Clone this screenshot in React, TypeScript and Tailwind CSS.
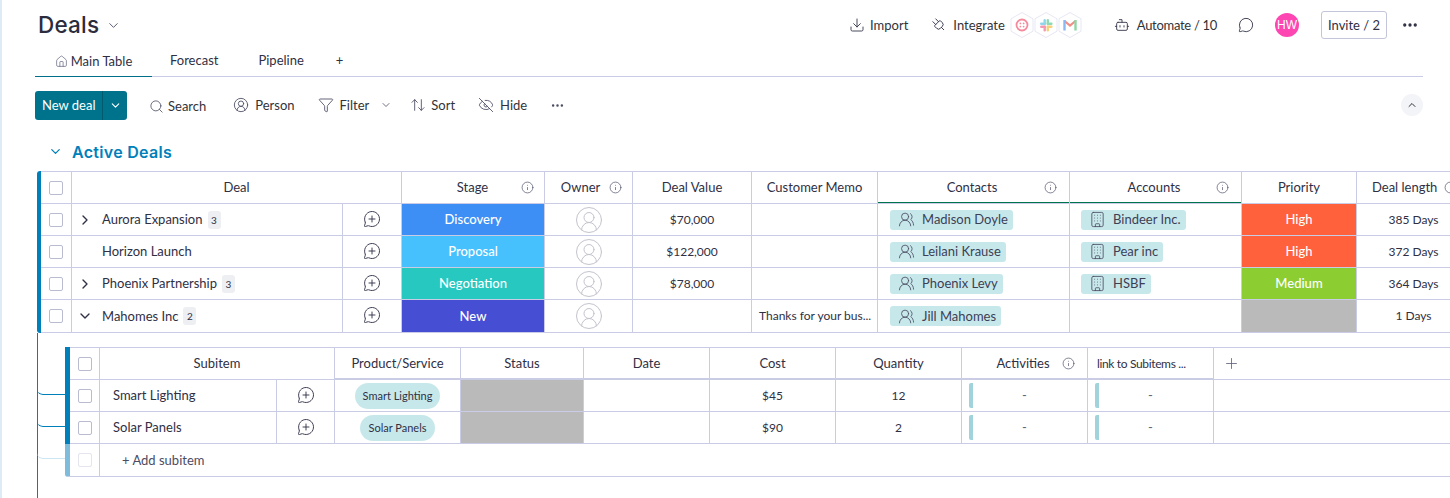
import { ReactNode } from "react";
import {
  ArrowUpDown,
  Bot,
  Building,
  ChevronDown,
  ChevronRight,
  ChevronUp,
  CircleUserRound,
  Download,
  Ellipsis,
  EyeOff,
  Funnel,
  House,
  Info,
  MessageCircle,
  MessageCirclePlus,
  Plug,
  Plus,
  Search,
  UsersRound,
} from "lucide-react";

const mainCols = "grid grid-cols-[31px_271px_59px_143px_88px_119px_126px_192px_172px_115px_114px]";
const subCols = "grid grid-cols-[30px_177px_58px_126px_123px_126px_126px_126px_126px_126px_400px]";
const thick = "shadow-[inset_0_-1px_0_#c9cce4]";

const deals = [
  {
    name: "Aurora Expansion",
    count: 3,
    arrow: "right",
    stage: "Discovery",
    stageColor: "bg-[#3d8ff5]",
    value: "$70,000",
    memo: "",
    contact: "Madison Doyle",
    account: "Bindeer Inc.",
    priority: "High",
    priorityColor: "bg-[#fe613c]",
    length: "385 Days",
  },
  {
    name: "Horizon Launch",
    count: 0,
    arrow: "",
    stage: "Proposal",
    stageColor: "bg-[#46c1fe]",
    value: "$122,000",
    memo: "",
    contact: "Leilani Krause",
    account: "Pear inc",
    priority: "High",
    priorityColor: "bg-[#fe613c]",
    length: "372 Days",
  },
  {
    name: "Phoenix Partnership",
    count: 3,
    arrow: "right",
    stage: "Negotiation",
    stageColor: "bg-[#26c8bf]",
    value: "$78,000",
    memo: "",
    contact: "Phoenix Levy",
    account: "HSBF",
    priority: "Medium",
    priorityColor: "bg-[#8ccd32]",
    length: "364 Days",
  },
  {
    name: "Mahomes Inc",
    count: 2,
    arrow: "down",
    stage: "New",
    stageColor: "bg-[#464ed4]",
    value: "",
    memo: "Thanks for your bus...",
    contact: "Jill Mahomes",
    account: "",
    priority: "",
    priorityColor: "bg-[#bababa]",
    length: "1 Days",
  },
];

const subitems = [
  { name: "Smart Lighting", cost: "$45", qty: "12" },
  { name: "Solar Panels", cost: "$90", qty: "2" },
];

function Cell({ children, className = "" }: { children?: ReactNode; className?: string }) {
  return (
    <div className={`flex items-center justify-center min-w-0 border-r border-[#c9cce4] whitespace-nowrap ${className}`}>
      {children}
    </div>
  );
}

function HeadInfo({ label }: { label: string }) {
  return (
    <div className="flex items-center justify-between w-full">
      <span className="flex-1 text-center">{label}</span>
      <Info className="w-[13px] h-[13px] text-[#50526b] shrink-0" strokeWidth={1.3} />
    </div>
  );
}

function Checkbox({ faded }: { faded?: boolean }) {
  return (
    <span className={`block w-[14px] h-[14px] bg-white rounded-[2px] border ${faded ? "border-[#e4e5ee]" : "border-[#b9bbd0]"}`} />
  );
}

function Hex({ children }: { children: ReactNode }) {
  return (
    <svg viewBox="0 0 24 28" className="w-[24px] h-[28px]">
      <path d="M12 1.5 L23 7.8 V20.2 L12 26.5 L1 20.2 V7.8 Z" fill="white" stroke="#e7e8f3" strokeWidth="1" />
      {children}
    </svg>
  );
}

function Tag({ icon, text }: { icon: ReactNode; text: string }) {
  return (
    <span className="flex items-center gap-[7px] h-[20px] pl-[8px] pr-[5px] rounded-[3px] bg-[#c7e8eb] text-[#3d3f55]">
      {icon}
      {text}
    </span>
  );
}

function Toolbar({ icon, label, className = "" }: { icon: ReactNode; label: string; className?: string }) {
  return (
    <span className={`flex items-center text-[#323338] ${className}`}>
      {icon}
      {label}
    </span>
  );
}

export default function App() {
  return (
    <div className="w-[1450px] h-[498px] overflow-hidden bg-white border-l-2 border-[#dcebf5] text-[13px] leading-none text-[#2f3044] font-['Lato','Inter',sans-serif]">
      {/* board header */}
      <div className="flex items-center justify-between h-[50px] pl-[36px] pr-[31px]">
        <div className="flex items-center gap-[7px]">
          <h1 className="text-[22.5px] font-medium tracking-[0.2px] font-['Inter',sans-serif] text-[#2b2c3c]">Deals</h1>
          <ChevronDown className="w-[15px] h-[15px] text-[#50526b]" strokeWidth={1.5} />
        </div>
        <div className="flex items-center">
          <Toolbar icon={<Download className="w-[16px] h-[16px] mr-[5px] text-[#3b3c50]" strokeWidth={1.4} />} label="Import" className="mr-[23px]" />
          <Toolbar icon={<Plug className="w-[16px] h-[16px] mr-[6px] -rotate-45 text-[#3b3c50]" strokeWidth={1.4} />} label="Integrate" className="mr-[5px]" />
          <div className="flex items-center mr-[32px]">
            <Hex>
              <circle cx="12" cy="14" r="5.5" fill="none" stroke="#f58a9d" strokeWidth="1.8" />
              <circle cx="10.4" cy="12.4" r="0.9" fill="#f58a9d" />
              <circle cx="13.6" cy="12.4" r="0.9" fill="#f58a9d" />
              <circle cx="10.4" cy="15.6" r="0.9" fill="#f58a9d" />
              <circle cx="13.6" cy="15.6" r="0.9" fill="#f58a9d" />
            </Hex>
            <Hex>
              <rect x="9.5" y="8" width="2.4" height="6" rx="1.2" fill="#8fd6ea" />
              <rect x="6" y="11.5" width="6" height="2.4" rx="1.2" fill="#8fd6ea" />
              <rect x="12.6" y="8" width="2.4" height="6" rx="1.2" fill="#8fd9b4" />
              <rect x="12.6" y="11.5" width="6" height="2.4" rx="1.2" fill="#8fd9b4" />
              <rect x="9.5" y="14.5" width="2.4" height="6" rx="1.2" fill="#f29ab4" />
              <rect x="6" y="14.5" width="6" height="2.4" rx="1.2" fill="#f29ab4" />
              <rect x="12.6" y="14.5" width="2.4" height="6" rx="1.2" fill="#f6d27c" />
              <rect x="12.6" y="14.5" width="6" height="2.4" rx="1.2" fill="#f6d27c" />
            </Hex>
            <Hex>
              <path d="M6.5 10 L12 14.5 L17.5 10" fill="none" stroke="#f08f86" strokeWidth="2.2" />
              <path d="M6.5 9 V19.5" stroke="#8ab8f2" strokeWidth="2.4" />
              <path d="M17.5 9 V19.5" stroke="#8ed6a5" strokeWidth="2.4" />
            </Hex>
          </div>
          <Toolbar icon={<Bot className="w-[16px] h-[16px] mr-[7px] text-[#3b3c50]" strokeWidth={1.4} />} label="Automate / 10" className="mr-[21px] tracking-[-0.3px]" />
          <MessageCircle className="w-[16px] h-[16px] mr-[21px] text-[#3b3c50]" strokeWidth={1.4} />
          <span className="flex items-center justify-center w-[24px] h-[24px] mr-[22px] rounded-full bg-[#fd46b1] text-white text-[12px] font-['Liberation_Sans',sans-serif]">HW</span>
          <span className="flex items-center justify-center w-[66px] h-[28px] mr-[14px] rounded-[3px] border border-[#c3c5da]">Invite / 2</span>
          <Ellipsis className="w-[18px] h-[18px] text-[#2f3044]" strokeWidth={2.4} />
        </div>
      </div>

      {/* tabs */}
      <div className="flex items-stretch h-[27px] ml-[33px] mr-[27px] border-b border-[#c9cce4]">
        <div className="flex items-center justify-center w-[117px] gap-[3px] -mb-[1px] border-b border-[#00708a] pb-[4px]">
          <House className="w-[13px] h-[13px] text-[#62647c]" strokeWidth={1.3} />
          Main Table
        </div>
        <span className="flex items-center pb-[6px] ml-[18px]">Forecast</span>
        <span className="flex items-center pb-[6px] ml-[40px]">Pipeline</span>
        <span className="flex items-center pb-[6px] ml-[32px]">+</span>
      </div>

      {/* toolbar */}
      <div className="flex items-center h-[56px] ml-[33px] mr-[27px]">
        <div className="flex items-stretch h-[29px] rounded-[3px] bg-[#00738c] text-white whitespace-nowrap">
          <span className="flex items-center pl-[7px] w-[68px] border-r border-[#005a6e]">New deal</span>
          <span className="flex items-center justify-center w-[24px]">
            <ChevronDown className="w-[13px] h-[13px]" strokeWidth={2} />
          </span>
        </div>
        <Toolbar icon={<Search className="w-[15px] h-[15px] mr-[4px] text-[#4b4d63]" strokeWidth={1.3} />} label="Search" className="ml-[22px] pt-[2px]" />
        <Toolbar icon={<CircleUserRound className="w-[16px] h-[16px] mr-[6px] text-[#4b4d63]" strokeWidth={1.3} />} label="Person" className="ml-[27px]" />
        <Toolbar icon={<Funnel className="w-[16px] h-[16px] mr-[6px] text-[#4b4d63]" strokeWidth={1.3} />} label="Filter" className="ml-[23px]" />
        <ChevronDown className="w-[12px] h-[12px] ml-[11px] text-[#4b4d63]" strokeWidth={1.6} />
        <Toolbar icon={<ArrowUpDown className="w-[16px] h-[16px] mr-[5px] text-[#4b4d63]" strokeWidth={1.3} />} label="Sort" className="ml-[18px]" />
        <Toolbar icon={<EyeOff className="w-[16px] h-[16px] mr-[6px] text-[#4b4d63]" strokeWidth={1.3} />} label="Hide" className="ml-[23px]" />
        <Ellipsis className="w-[15px] h-[15px] ml-[23px] text-[#4b4d63]" strokeWidth={2} />
        <span className="flex items-center justify-center w-[22px] h-[22px] ml-auto rounded-full bg-[#f3f4f8]">
          <ChevronUp className="w-[12px] h-[12px] text-[#323338]" strokeWidth={2} />
        </span>
      </div>

      {/* group title */}
      <div className="flex items-center h-[38px] ml-[46px] pb-[1px] text-[#0080ba]">
        <ChevronDown className="w-[15px] h-[15px] mr-[9px]" strokeWidth={2} />
        <h2 className="text-[16px] font-semibold font-['Inter',sans-serif] tracking-[0.3px]">Active Deals</h2>
      </div>

      {/* main table */}
      <div className="ml-[35px] border-l-4 border-[#0080ba] rounded-l-[3px]">
        <div className={`${mainCols} h-[33px] border-y border-[#c9cce4]`}>
          <Cell><Checkbox /></Cell>
          <Cell className="col-span-2">Deal</Cell>
          <Cell className="pl-[22px] pr-[10px]"><HeadInfo label="Stage" /></Cell>
          <Cell className="pl-[7px] pr-[10px]"><HeadInfo label="Owner" /></Cell>
          <Cell>Deal Value</Cell>
          <Cell>Customer Memo</Cell>
          <Cell className="pl-[22px] pr-[12px] shadow-[inset_0_-1px_0_#00734f]"><HeadInfo label="Contacts" /></Cell>
          <Cell className="pl-[22px] pr-[12px] shadow-[inset_0_-1px_0_#00734f]"><HeadInfo label="Accounts" /></Cell>
          <Cell>Priority</Cell>
          <Cell className="justify-start pl-[15px] gap-[7px]">
            Deal length
            <Info className="w-[13px] h-[13px] text-[#50526b] shrink-0" strokeWidth={1.3} />
          </Cell>
        </div>
        {deals.map((deal, i) => (
          <div key={deal.name} className={`${mainCols} ${i === 3 ? "h-[33px]" : "h-[32px]"} border-b border-[#c9cce4]`}>
            <Cell><Checkbox /></Cell>
            <Cell className="justify-start">
              <span className="flex items-center justify-start pl-[5px] w-[30px] shrink-0 text-[#2f3044]">
                {deal.arrow === "right" && <ChevronRight className="w-[16px] h-[16px]" strokeWidth={2} />}
                {deal.arrow === "down" && <ChevronDown className="w-[16px] h-[16px]" strokeWidth={2} />}
              </span>
              {deal.name}
              {deal.count > 0 && (
                <span className="flex items-center justify-center w-[13px] h-[18px] ml-[5px] rounded-[3px] bg-[#eeeff3] text-[10px]">{deal.count}</span>
              )}
            </Cell>
            <Cell>
              <MessageCirclePlus className="w-[18px] h-[18px] text-[#3b3c50] -mt-[2px]" strokeWidth={1.3} />
            </Cell>
            <Cell className={`${deal.stageColor} text-white font-medium`}>{deal.stage}</Cell>
            <Cell>
              <CircleUserRound className="w-[30px] h-[30px] text-[#c3c4cd]" strokeWidth={0.8} />
            </Cell>
            <Cell className="text-[12px]">{deal.value}</Cell>
            <Cell className="justify-start pl-[7px] text-[12px]">{deal.memo}</Cell>
            <Cell className="justify-start pl-[12px]">
              <Tag icon={<UsersRound className="w-[17px] h-[17px] text-[#4b4d63]" strokeWidth={1.2} />} text={deal.contact} />
            </Cell>
            <Cell className="justify-start pl-[11px]">
              {deal.account && <Tag icon={<Building className="w-[17px] h-[17px] text-[#4b4d63]" strokeWidth={1.2} />} text={deal.account} />}
            </Cell>
            <Cell className={`${deal.priorityColor} text-white font-medium`}>{deal.priority}</Cell>
            <Cell className="text-[12px]">{deal.length}</Cell>
          </div>
        ))}
      </div>

      {/* subitems */}
      <div className="ml-[35px] border-l border-[#0080ba] pt-[14px] pl-[27px] h-[166px]">
        <div className="border-l-[5px] border-[#0080ba]">
          <div className={`${subCols} h-[33px] border-y border-[#c9cce4]`}>
            <Cell><Checkbox /></Cell>
            <Cell className="col-span-2">Subitem</Cell>
            <Cell className={thick}>Product/Service</Cell>
            <Cell className={thick}>Status</Cell>
            <Cell className={thick}>Date</Cell>
            <Cell className={thick}>Cost</Cell>
            <Cell className={thick}>Quantity</Cell>
            <Cell className={`pl-[22px] pr-[12px] ${thick}`}><HeadInfo label="Activities" /></Cell>
            <Cell className={`justify-start pl-[9px] text-[12px] tracking-[-0.35px] ${thick}`}>link to Subitems ...</Cell>
            <div className="flex items-center pl-[9px]">
              <Plus className="w-[17px] h-[17px] text-[#62647c]" strokeWidth={1.2} />
            </div>
          </div>
          {subitems.map((sub) => (
            <div key={sub.name} className={`${subCols} relative h-[32px] border-b border-[#c9cce4]`}>
              <span className="absolute left-[-33px] top-[-1px] w-[28px] h-[16px] rounded-bl-[6px] border-b border-[#0080ba]" />
              <Cell><Checkbox /></Cell>
              <Cell className="justify-start pl-[13px]">{sub.name}</Cell>
              <Cell>
                <MessageCirclePlus className="w-[18px] h-[18px] text-[#3b3c50] -mt-[2px]" strokeWidth={1.3} />
              </Cell>
              <Cell>
                <span className="flex items-center h-[26px] px-[8px] rounded-full bg-[#c7e8eb] text-[11px]">{sub.name}</span>
              </Cell>
              <Cell className="bg-[#bababa]" />
              <Cell />
              <Cell className="text-[12px]">{sub.cost}</Cell>
              <Cell className="text-[12px]">{sub.qty}</Cell>
              <Cell className="relative text-[#62647c]">
                <span className="absolute left-[7px] top-[3px] bottom-[3px] w-[4px] rounded-l-[2px] bg-[#a1d3dc]" />
                -
              </Cell>
              <Cell className="relative text-[#62647c]">
                <span className="absolute left-[7px] top-[3px] bottom-[3px] w-[4px] rounded-l-[2px] bg-[#a1d3dc]" />
                -
              </Cell>
              <div />
            </div>
          ))}
        </div>
        <div className="relative flex h-[33px] border-l-[5px] border-b border-[#7fbcdc] border-b-[#c9cce4] rounded-bl-[3px]">
          <span className="absolute left-[-33px] top-[-1px] w-[28px] h-[16px] rounded-bl-[6px] border-b border-[#cde6f3]" />
          <div className="flex items-center justify-center w-[30px] border-r border-[#c9cce4]">
            <Checkbox faded />
          </div>
          <span className="flex items-center pl-[22px] text-[#4b4d63]">+ Add subitem</span>
        </div>
      </div>
    </div>
  );
}
